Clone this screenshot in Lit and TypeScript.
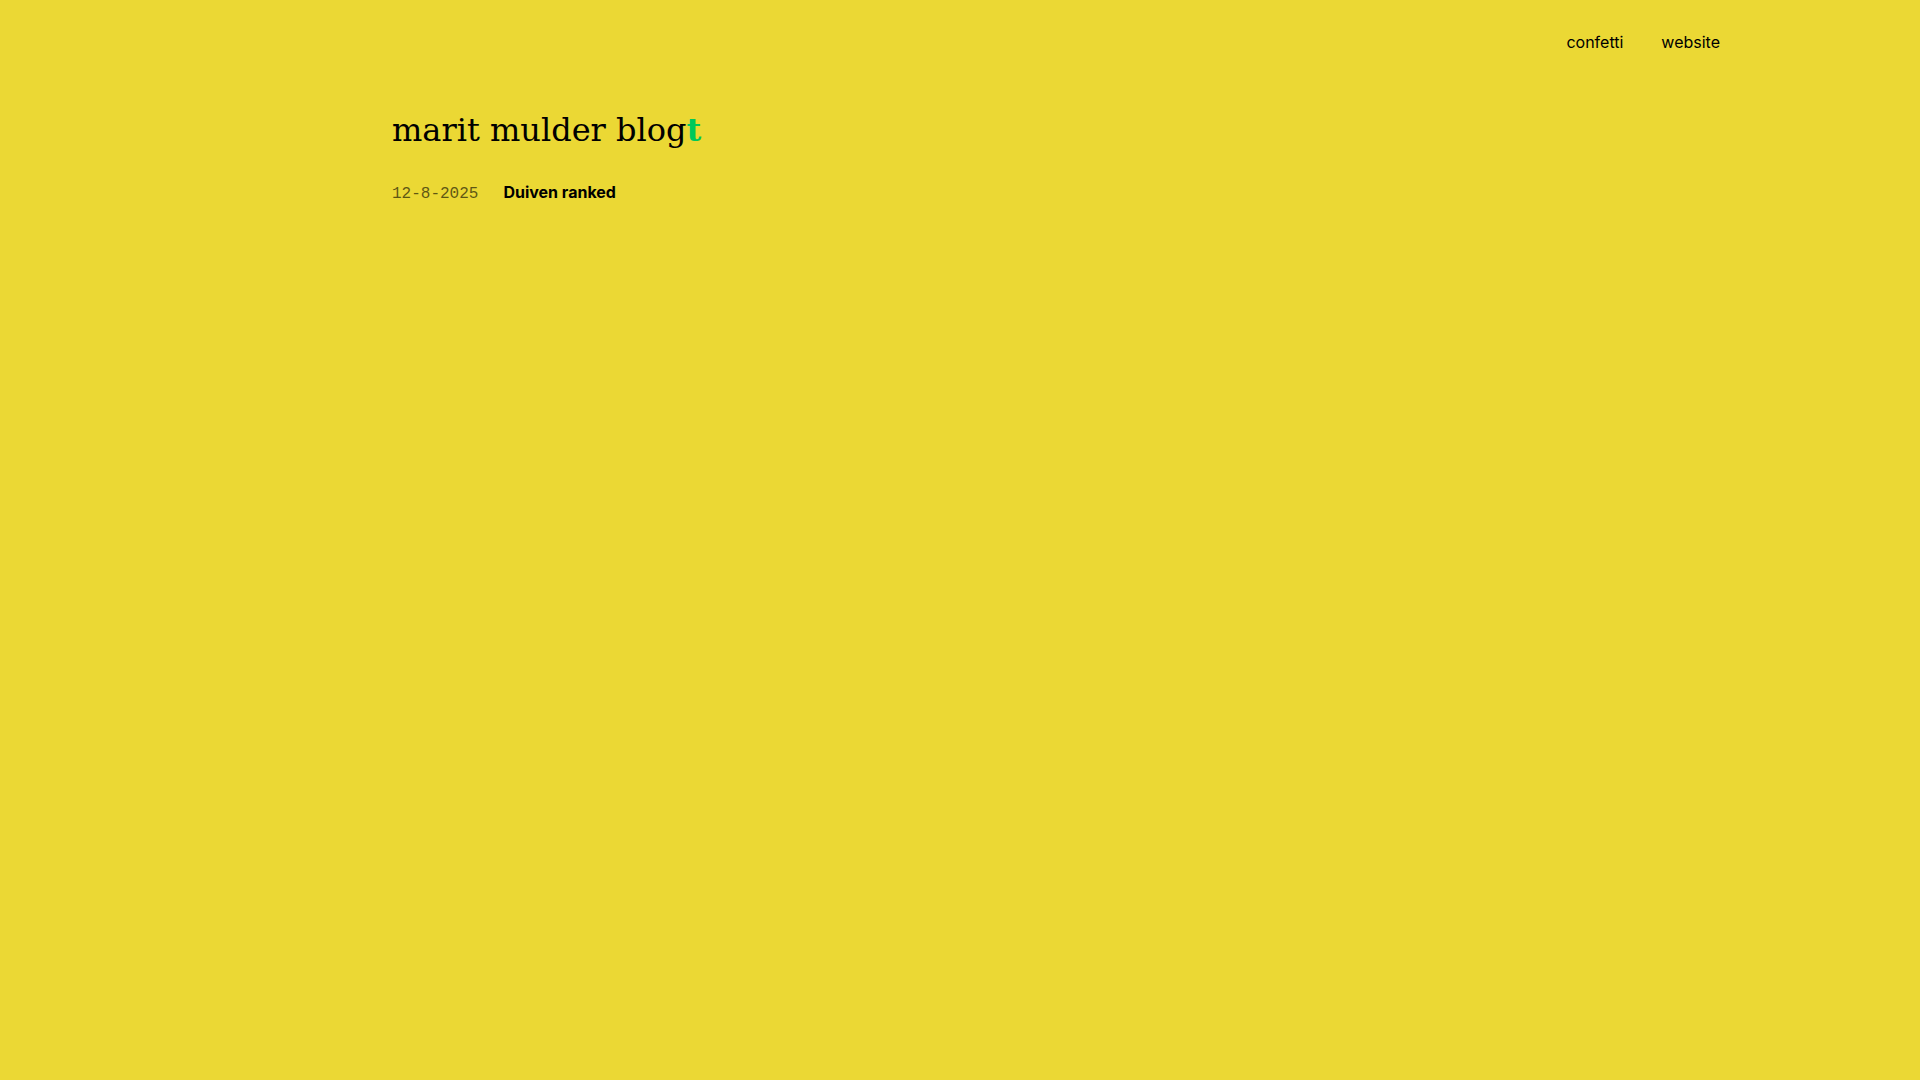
import { LitElement, html, css } from "lit";
import { customElement } from "lit/decorators.js";

interface Post {
  date: string;
  title: string;
}

const posts: Post[] = [{ date: "12-8-2025", title: "Duiven ranked" }];

@customElement("app-root")
export class AppRoot extends LitElement {
  static styles = css`
    :host {
      display: block;
      min-height: 100vh;
      background: #ebd834;
      color: #000;
      font: 16px/24px Inter, "Open Sans", sans-serif;
    }
    a {
      color: inherit;
      text-decoration: none;
    }
    .nav {
      display: flex;
      justify-content: flex-end;
      gap: 38px;
      padding: 30px 200px 0 16px;
    }
    .content {
      max-width: 1136px;
      margin: 0 auto;
      padding: 56px 16px 32px;
    }
    .title {
      margin: 0 0 30px;
      font: 400 32px/40px "DejaVu Serif", serif;
    }
    .accent {
      color: #00c85a;
      font-weight: 700;
    }
    .posts {
      margin: 0;
      padding: 0;
      list-style: none;
    }
    .post {
      display: flex;
      align-items: baseline;
      gap: 25px;
    }
    .date {
      font-family: "Liberation Mono", monospace;
      opacity: 0.6;
    }
    .link {
      font-weight: 700;
    }
  `;

  render() {
    return html`
      <nav class="nav">
        <a href="#confetti">confetti</a>
        <a href="#website">website</a>
      </nav>
      <main class="content">
        <h1 class="title">marit mulder blog<span class="accent">t</span></h1>
        <ul class="posts">
          ${posts.map(
            (post) => html`
              <li class="post">
                <time class="date">${post.date}</time>
                <a class="link" href="#post">${post.title}</a>
              </li>
            `
          )}
        </ul>
      </main>
    `;
  }
}
